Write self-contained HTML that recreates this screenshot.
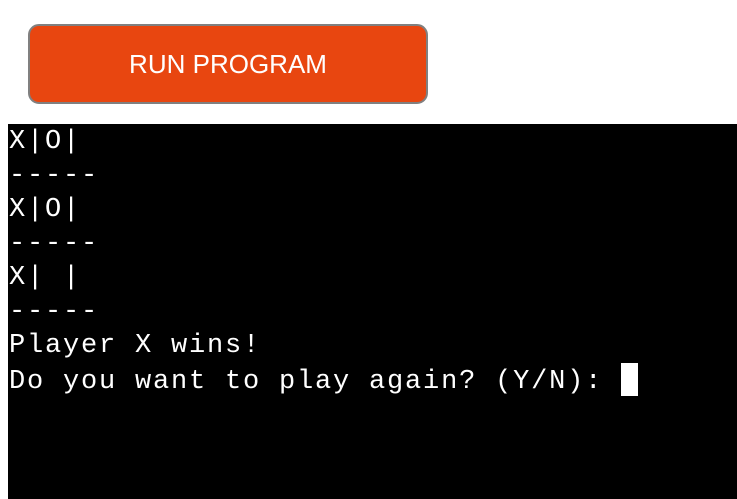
<!DOCTYPE html>
<html><head><style>
html,body{margin:0;padding:0;background:#fff;width:737px;height:499px;overflow:hidden}
.btn{position:absolute;left:28px;top:24px;width:396px;height:76px;background:#E84610;border:2px solid #808080;border-radius:11px;color:#fff;font:26px "Liberation Sans",Arial,sans-serif;text-align:center;line-height:76px;letter-spacing:0px}
.term{position:absolute;left:8px;top:124px;right:0;bottom:0;background:#000;color:#fff;font-family:"Liberation Mono",monospace;font-size:27px;letter-spacing:1.8px;line-height:34px;white-space:pre;padding-top:1px;padding-left:1px}
.cur{display:inline-block;width:17px;height:33px;background:#fff;vertical-align:-8px}
</style></head><body>
<div class="btn">RUN PROGRAM</div>
<div class="term">X|O|
-----
X|O|
-----
X| |
-----
Player X wins!
Do you want to play again? (Y/N): <span class="cur"></span></div>
</body></html>
